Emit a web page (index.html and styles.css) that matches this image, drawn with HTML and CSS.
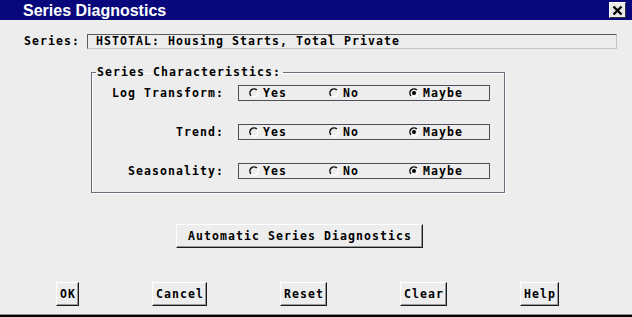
FILE: index.html
```html
<!DOCTYPE html>
<html>
<head>
<meta charset="utf-8">
<link rel="stylesheet" href="styles.css">
</head>
<body>
<div class="window">
  <div class="titlebar">
    <span class="title">Series Diagnostics</span>
    <button class="close" type="button" aria-label="Close">
      <svg width="11" height="11" viewBox="0 0 11 11"><path d="M1.5 1.5 L9.5 9.5 M9.5 1.5 L1.5 9.5" stroke="#000" stroke-width="2.4" fill="none"/></svg>
    </button>
  </div>

  <div class="series-row">
    <span class="series-label">Series:</span>
    <div class="series-field">HSTOTAL: Housing Starts, Total Private</div>
  </div>

  <fieldset class="group">
    <legend class="group-title">Series Characteristics:</legend>

    <div class="row">
      <span class="row-label">Log Transform:</span>
      <div class="radio-box">
        <span class="opt"><svg class="radio" viewBox="0 0 10 10"><path d="M2.1 7.9 A4 4 0 0 1 7.9 2.1" stroke="#111" stroke-width="1.5" fill="none"/><path d="M7.9 2.1 A4 4 0 0 1 2.1 7.9" stroke="#fff" stroke-width="1.5" fill="none"/></svg>Yes</span>
        <span class="opt"><svg class="radio" viewBox="0 0 10 10"><path d="M2.1 7.9 A4 4 0 0 1 7.9 2.1" stroke="#111" stroke-width="1.5" fill="none"/><path d="M7.9 2.1 A4 4 0 0 1 2.1 7.9" stroke="#fff" stroke-width="1.5" fill="none"/></svg>No</span>
        <span class="opt"><svg class="radio" viewBox="0 0 10 10"><path d="M2.1 7.9 A4 4 0 0 1 7.9 2.1" stroke="#111" stroke-width="1.5" fill="none"/><path d="M7.9 2.1 A4 4 0 0 1 2.1 7.9" stroke="#fff" stroke-width="1.5" fill="none"/><circle cx="5" cy="5" r="2" fill="#000"/></svg>Maybe</span>
      </div>
    </div>

    <div class="row">
      <span class="row-label">Trend:</span>
      <div class="radio-box">
        <span class="opt"><svg class="radio" viewBox="0 0 10 10"><path d="M2.1 7.9 A4 4 0 0 1 7.9 2.1" stroke="#111" stroke-width="1.5" fill="none"/><path d="M7.9 2.1 A4 4 0 0 1 2.1 7.9" stroke="#fff" stroke-width="1.5" fill="none"/></svg>Yes</span>
        <span class="opt"><svg class="radio" viewBox="0 0 10 10"><path d="M2.1 7.9 A4 4 0 0 1 7.9 2.1" stroke="#111" stroke-width="1.5" fill="none"/><path d="M7.9 2.1 A4 4 0 0 1 2.1 7.9" stroke="#fff" stroke-width="1.5" fill="none"/></svg>No</span>
        <span class="opt"><svg class="radio" viewBox="0 0 10 10"><path d="M2.1 7.9 A4 4 0 0 1 7.9 2.1" stroke="#111" stroke-width="1.5" fill="none"/><path d="M7.9 2.1 A4 4 0 0 1 2.1 7.9" stroke="#fff" stroke-width="1.5" fill="none"/><circle cx="5" cy="5" r="2" fill="#000"/></svg>Maybe</span>
      </div>
    </div>

    <div class="row">
      <span class="row-label">Seasonality:</span>
      <div class="radio-box">
        <span class="opt"><svg class="radio" viewBox="0 0 10 10"><path d="M2.1 7.9 A4 4 0 0 1 7.9 2.1" stroke="#111" stroke-width="1.5" fill="none"/><path d="M7.9 2.1 A4 4 0 0 1 2.1 7.9" stroke="#fff" stroke-width="1.5" fill="none"/></svg>Yes</span>
        <span class="opt"><svg class="radio" viewBox="0 0 10 10"><path d="M2.1 7.9 A4 4 0 0 1 7.9 2.1" stroke="#111" stroke-width="1.5" fill="none"/><path d="M7.9 2.1 A4 4 0 0 1 2.1 7.9" stroke="#fff" stroke-width="1.5" fill="none"/></svg>No</span>
        <span class="opt"><svg class="radio" viewBox="0 0 10 10"><path d="M2.1 7.9 A4 4 0 0 1 7.9 2.1" stroke="#111" stroke-width="1.5" fill="none"/><path d="M7.9 2.1 A4 4 0 0 1 2.1 7.9" stroke="#fff" stroke-width="1.5" fill="none"/><circle cx="5" cy="5" r="2" fill="#000"/></svg>Maybe</span>
      </div>
    </div>
  </fieldset>

  <button class="btn auto-btn" type="button">Automatic Series Diagnostics</button>

  <div class="actions">
    <button class="btn" type="button">OK</button>
    <button class="btn" type="button">Cancel</button>
    <button class="btn" type="button">Reset</button>
    <button class="btn" type="button">Clear</button>
    <button class="btn" type="button">Help</button>
  </div>
</div>
</body>
</html>
```

FILE: styles.css
```css
html, body {
  margin: 0;
  padding: 0;
  background: #ededed;
}

.window {
  width: 632px;
  height: 317px;
  box-sizing: border-box;
  overflow: hidden;
  background: #ededed;
  border-bottom: 2px solid #000;
  box-shadow: inset 0 -1px 0 #8a8a8a;
  font-family: "DejaVu Sans Mono", "Liberation Mono", monospace;
  font-weight: bold;
  font-size: 11.5px;
  letter-spacing: 1.077px;
  color: #000;
}

.titlebar {
  height: 20px;
  background: #08087c;
  display: flex;
  align-items: center;
  padding-left: 23px;
}

.title {
  font-family: "Liberation Sans", Arial, sans-serif;
  font-weight: bold;
  font-size: 16px;
  letter-spacing: 0;
  line-height: 20px;
  color: #fff;
  padding-top: 1px;
}

.close {
  margin: 0 6px 0 auto;
  padding: 0;
  width: 17px;
  height: 16px;
  box-sizing: border-box;
  background: #e9e9e9;
  border-top: 1px solid #fff;
  border-left: 1px solid #fff;
  border-right: 1px solid #333;
  border-bottom: 1px solid #333;
  display: flex;
  align-items: center;
  justify-content: center;
}

.close svg {
  display: block;
}

.series-row {
  margin-top: 14px;
  height: 15px;
  display: flex;
  align-items: center;
  padding-left: 24px;
}

.series-label {
  width: 63px;
  line-height: 15px;
}

.series-field {
  width: 530px;
  height: 15px;
  box-sizing: border-box;
  border-top: 1px solid #5a5a64;
  border-left: 1px solid #5a5a64;
  border-bottom: 1px solid #c4c4c8;
  border-right: 1px solid #c4c4c8;
  padding-left: 8px;
  line-height: 13px;
  white-space: nowrap;
}

.group {
  margin: 15px 0 0 91px;
  width: 414px;
  box-sizing: border-box;
  padding: 5px 0 13px 0;
  border: 1px solid #6a6a78;
  box-shadow: inset 1px 1px 0 #fff, 1px 1px 0 #fff;
  min-inline-size: 0;
  display: flex;
  flex-direction: column;
  gap: 23px;
}

.group-title {
  margin-left: 4px;
  padding: 0 2px 0 1px;
  line-height: 16px;
}

.row {
  display: flex;
  align-items: center;
  height: 16px;
}

.row-label {
  width: 132px;
  text-align: right;
  margin-right: 14px;
  line-height: 16px;
}

.radio-box {
  width: 252px;
  height: 16px;
  box-sizing: border-box;
  border: 1px solid #4e4e58;
  display: flex;
  align-items: center;
  padding-left: 10px;
}

.opt {
  width: 80px;
  display: flex;
  align-items: center;
  gap: 4px;
  line-height: 14px;
}

.radio {
  width: 10px;
  height: 10px;
  display: block;
  flex: none;
}

.btn {
  display: block;
  margin: 0;
  appearance: none;
  font: inherit;
  letter-spacing: inherit;
  color: #000;
  background: #ededed;
  height: 24px;
  box-sizing: border-box;
  padding: 0 2px 0 3px;
  line-height: 22px;
  border-top: 1px solid #fff;
  border-left: 1px solid #fff;
  border-right: 1px solid #1a1a1a;
  border-bottom: 1px solid #1a1a1a;
  box-shadow: inset -1px -1px 0 #9a9a9a;
  white-space: nowrap;
}

.auto-btn {
  margin: 31px 0 0 176px;
  padding: 0 10px 0 11px;
}

.actions {
  margin-top: 34px;
  display: flex;
  gap: 73px;
  padding-left: 56px;
}
```
